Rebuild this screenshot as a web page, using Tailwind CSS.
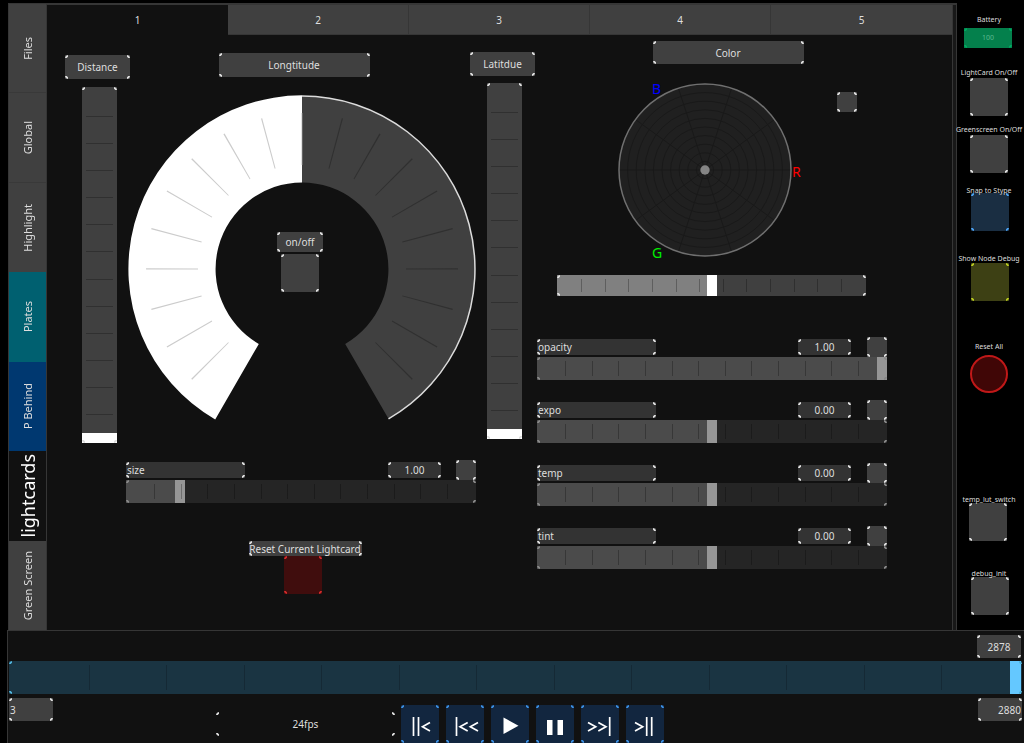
<!DOCTYPE html>
<html lang="en">
<head>
<meta charset="utf-8">
<meta name="viewport" content="width=device-width, initial-scale=1">
<title>Lightcards control panel</title>
<script src="https://cdn.jsdelivr.net/npm/@tailwindcss/browser@4"></script>
</head>
<!-- Elements with data-corners get four small corner marks in their text colour. -->
<body class="flex min-h-screen flex-col overflow-x-hidden bg-black font-['Noto_Sans',sans-serif] text-[10px] leading-3 text-[#dedede] **:data-corners:relative **:data-corners:before:pointer-events-none **:data-corners:before:absolute **:data-corners:before:inset-0 **:data-corners:before:z-10 **:data-corners:before:rounded-[3px] **:data-corners:before:border-2 **:data-corners:before:border-current **:data-corners:before:content-[''] **:data-corners:before:[mask:conic-gradient(at_3px_3px,transparent_75%,black_0)_0_0/calc(100%_-_3px)_calc(100%_-_3px)]">

<div class="flex flex-1 pt-[3px] pl-2">
  <nav aria-label="Pages" class="flex w-[39px] shrink-0 flex-col border-t border-r border-l border-[#363636] text-[11px]">
    <button class="flex flex-1 items-center justify-center bg-[#404040] shadow-[inset_0_-1px_#393939]"><span class="rotate-180 [writing-mode:vertical-rl]">Files</span></button>
    <button class="flex flex-1 items-center justify-center bg-[#404040] shadow-[inset_0_-1px_#393939]"><span class="rotate-180 [writing-mode:vertical-rl]">Global</span></button>
    <button class="flex flex-1 items-center justify-center bg-[#404040]"><span class="rotate-180 [writing-mode:vertical-rl]">Highlight</span></button>
    <button class="flex flex-1 items-center justify-center bg-[#006070]"><span class="rotate-180 [writing-mode:vertical-rl]">Plates</span></button>
    <button class="flex flex-1 items-center justify-center bg-[#003870]"><span class="rotate-180 [writing-mode:vertical-rl]">P Behind</span></button>
    <button aria-current="page" class="flex flex-1 items-center justify-center bg-[#111] text-[18px] leading-5 text-white"><span class="rotate-180 [writing-mode:vertical-rl]">lightcards</span></button>
    <button class="flex flex-1 items-center justify-center bg-[#404040]"><span class="rotate-180 [writing-mode:vertical-rl]">Green Screen</span></button>
  </nav>

  <main class="min-w-0 flex-1 border-t-2 border-r border-[#363636] bg-[#111]">
    <div role="tablist" class="grid h-[30px] grid-cols-5">
      <button role="tab" aria-selected="true">1</button>
      <button role="tab" aria-selected="false" class="border-r border-b border-[#363636] bg-[#404040]">2</button>
      <button role="tab" aria-selected="false" class="border-r border-b border-[#363636] bg-[#404040]">3</button>
      <button role="tab" aria-selected="false" class="border-r border-b border-[#363636] bg-[#404040]">4</button>
      <button role="tab" aria-selected="false" class="border-b border-[#363636] bg-[#404040]">5</button>
    </div>

    <div class="grid grid-cols-[490fr_415fr]">
      <section aria-label="Position" class="pl-[18px]">
        <div class="flex">
          <div class="flex w-[65px] shrink-0 flex-col items-center pt-5">
            <label for="distance" data-corners class="flex h-6 w-full items-center justify-center bg-[#404040]">Distance</label>
            <div data-corners class="mt-2 ml-1 h-[356px] w-[35px]">
              <input id="distance" type="range" min="0" max="100" value="0" class="block h-full w-full appearance-none bg-[#404040] [direction:rtl] [writing-mode:vertical-lr] [&::-webkit-slider-thumb]:h-[10px] [&::-webkit-slider-thumb]:w-[35px] [&::-webkit-slider-thumb]:appearance-none [&::-webkit-slider-thumb]:bg-white">
              <div class="pointer-events-none absolute inset-x-1 top-[29px] bottom-7 bg-[repeating-linear-gradient(to_bottom,#303030_0_1px,transparent_1px_calc((100%_-_1px)/11))]"></div>
            </div>
          </div>

          <div class="-mr-1.5 -ml-0.5 flex min-w-0 flex-1 flex-col items-center pt-[18px]">
            <div data-corners class="mr-4 flex h-6 w-[151px] items-center justify-center bg-[#404040]">Longtitude</div>
            <div class="relative mt-[18px] w-full">
              <svg role="img" aria-label="Longitude dial" viewBox="-174 -174 348 325" class="block w-full">
                <path d="M0 -173V-86.5A86.5 86.5 0 0 1 43.2 74.9L86.5 149.8A173 173 0 0 0 0 -173Z" fill="#404040"/>
                <path d="M0 -173A173 173 0 0 1 86.5 149.8" fill="none" stroke="#dcdcdc" stroke-width="1.5"/>
                <path d="M0 -173.7V-86.5A86.5 86.5 0 0 0 -43.2 74.9L-86.8 150.4A173.7 173.7 0 0 1 0 -173.7Z" fill="#fff"/>
                <path d="M-91.5 92.3A130 130 0 0 1 -33.1 -125.7" pathLength="120.5" fill="none" stroke="#ccc" stroke-width="52" stroke-dasharray=".5 14.5"/>
                <path d="M33.1 -125.7A130 130 0 0 1 91.5 92.3" pathLength="120.5" fill="none" stroke="#303030" stroke-width="52" stroke-dasharray=".5 14.5"/>
                <path d="M0 -156V-104" stroke="#aaa" stroke-width=".7"/>
              </svg>
              <div class="absolute inset-x-0 top-[137px] flex flex-col items-center pr-1">
                <span id="onoff" data-corners class="flex h-5 w-[46px] items-center justify-center bg-[#404040]">on/off</span>
                <button aria-labelledby="onoff" data-corners class="mt-0.5 size-[38px] bg-[#404040]"></button>
              </div>
            </div>
          </div>

          <div class="mr-0.5 flex w-[65px] shrink-0 flex-col items-center pt-[17px]">
            <label for="latitude" data-corners class="flex h-6 w-full items-center justify-center bg-[#404040]">Latitdue</label>
            <div data-corners class="mt-[7px] ml-1 h-[356px] w-[35px]">
              <input id="latitude" type="range" min="0" max="100" value="0" class="block h-full w-full appearance-none bg-[#404040] [direction:rtl] [writing-mode:vertical-lr] [&::-webkit-slider-thumb]:h-[10px] [&::-webkit-slider-thumb]:w-[35px] [&::-webkit-slider-thumb]:appearance-none [&::-webkit-slider-thumb]:bg-white">
              <div class="pointer-events-none absolute inset-x-1 top-[29px] bottom-7 bg-[repeating-linear-gradient(to_bottom,#303030_0_1px,transparent_1px_calc((100%_-_1px)/11))]"></div>
            </div>
          </div>
        </div>

        <div class="mt-[17px] mr-[61px] ml-[61px]">
          <div class="flex h-5 items-center">
            <label for="size" data-corners class="flex h-4 w-[119px] items-center bg-[#333] pl-px">size</label>
            <div data-corners class="mr-[15px] ml-auto h-4 w-[53px] bg-[#333]"><input aria-label="size value" value="1.00" class="block h-full w-full text-center"></div>
            <button aria-label="Reset size" data-corners class="size-5 bg-[#404040]"></button>
          </div>
          <div data-corners class="h-[23px] text-[#888]">
            <input id="size" type="range" min="0" max="7" value="1" style="--fill:15%" class="block h-full w-full appearance-none bg-[#252525] bg-[linear-gradient(#4b4b4b,#4b4b4b)] bg-[length:var(--fill)_100%] bg-no-repeat [&::-webkit-slider-thumb]:h-[23px] [&::-webkit-slider-thumb]:w-[10px] [&::-webkit-slider-thumb]:appearance-none [&::-webkit-slider-thumb]:bg-[#969696]">
            <div class="pointer-events-none absolute inset-x-7 inset-y-1 bg-[repeating-linear-gradient(to_right,#0004_0_1px,transparent_1px_calc((100%_-_1px)/11))]"></div>
          </div>
        </div>

        <div class="mt-[38px] flex flex-col items-center pl-2">
          <span id="reset-card" data-corners class="flex h-[15px] w-[113px] items-center justify-center bg-[#404040] whitespace-nowrap">Reset Current Lightcard</span>
          <button aria-labelledby="reset-card" data-corners class="mr-1 size-[38px] bg-[#400d0d] text-[#d02a2a]"></button>
        </div>
      </section>

      <section aria-label="Color" class="pt-[6px] pr-[65px]">
        <div class="flex justify-center pl-8">
          <div data-corners class="flex h-[23px] w-[151px] items-center justify-center bg-[#404040]">Color</div>
        </div>
        <div class="mt-[19px] flex items-start justify-between pr-[30px] pl-[81px]">
          <svg role="img" aria-label="Color wheel" viewBox="-87 -87 186 175" width="186" height="175" class="shrink-0 overflow-visible font-['Noto_Sans',sans-serif] text-[14px]">
            <circle r="86" fill="#202020"/>
            <g fill="none" stroke="#191919">
              <circle r="8.6"/><circle r="17.2"/><circle r="25.8"/><circle r="34.4"/><circle r="43"/><circle r="51.6"/><circle r="60.2"/><circle r="68.8"/><circle r="77.4"/>
              <path d="M-86 0H86M-69.6 -50.5L69.6 50.5M-26.6 -81.8L26.6 81.8M26.6 -81.8L-26.6 81.8M69.6 -50.5L-69.6 50.5"/>
            </g>
            <circle r="86" fill="none" stroke="#707070" stroke-width="1.5"/>
            <circle r="4.7" fill="#858585"/>
            <text x="-53" y="-76" fill="#0000ff">B</text>
            <text x="87" y="7" fill="#ff0000">R</text>
            <text x="-53" y="88" fill="#00f000">G</text>
          </svg>
          <button aria-label="Reset color" data-corners class="mt-[9px] size-5 bg-[#404040]"></button>
        </div>
        <div data-corners class="mr-[21px] ml-5 mt-[17px] h-[21px]">
          <input aria-label="Color level" type="range" min="0" max="100" value="50" style="--fill:50%" class="block h-full w-full appearance-none bg-[#404040] bg-[linear-gradient(#808080,#808080)] bg-[length:var(--fill)_100%] bg-no-repeat [&::-webkit-slider-thumb]:h-[21px] [&::-webkit-slider-thumb]:w-[10px] [&::-webkit-slider-thumb]:appearance-none [&::-webkit-slider-thumb]:bg-white">
          <div class="pointer-events-none absolute inset-x-6 inset-y-1 bg-[repeating-linear-gradient(to_right,#0004_0_1px,transparent_1px_calc((100%_-_1px)/11))]"></div>
        </div>

        <div class="mt-[41px] flex flex-col gap-5">
          <div>
            <div class="flex h-5 items-center">
              <label for="opacity" data-corners class="flex h-4 w-[119px] items-center bg-[#333] pl-px">opacity</label>
              <div data-corners class="mr-4 ml-auto h-4 w-[53px] bg-[#333]"><input aria-label="opacity value" value="1.00" class="block h-full w-full text-center"></div>
              <button aria-label="Reset opacity" data-corners class="size-5 bg-[#404040]"></button>
            </div>
            <div data-corners class="h-[23px] text-[#888]">
              <input id="opacity" type="range" min="0" max="100" value="100" style="--fill:100%" class="block h-full w-full appearance-none bg-[#252525] bg-[linear-gradient(#4b4b4b,#4b4b4b)] bg-[length:var(--fill)_100%] bg-no-repeat [&::-webkit-slider-thumb]:h-[23px] [&::-webkit-slider-thumb]:w-[10px] [&::-webkit-slider-thumb]:appearance-none [&::-webkit-slider-thumb]:bg-[#969696]">
              <div class="pointer-events-none absolute inset-x-7 inset-y-1 bg-[repeating-linear-gradient(to_right,#0004_0_1px,transparent_1px_calc((100%_-_1px)/11))]"></div>
            </div>
          </div>
          <div>
            <div class="flex h-5 items-center">
              <label for="expo" data-corners class="flex h-4 w-[119px] items-center bg-[#333] pl-px">expo</label>
              <div data-corners class="mr-4 ml-auto h-4 w-[53px] bg-[#333]"><input aria-label="expo value" value="0.00" class="block h-full w-full text-center"></div>
              <button aria-label="Reset expo" data-corners class="size-5 bg-[#404040]"></button>
            </div>
            <div data-corners class="h-[23px] text-[#888]">
              <input id="expo" type="range" min="-100" max="100" value="0" style="--fill:50%" class="block h-full w-full appearance-none bg-[#252525] bg-[linear-gradient(#4b4b4b,#4b4b4b)] bg-[length:var(--fill)_100%] bg-no-repeat [&::-webkit-slider-thumb]:h-[23px] [&::-webkit-slider-thumb]:w-[10px] [&::-webkit-slider-thumb]:appearance-none [&::-webkit-slider-thumb]:bg-[#969696]">
              <div class="pointer-events-none absolute inset-x-7 inset-y-1 bg-[repeating-linear-gradient(to_right,#0004_0_1px,transparent_1px_calc((100%_-_1px)/11))]"></div>
            </div>
          </div>
          <div>
            <div class="flex h-5 items-center">
              <label for="temp" data-corners class="flex h-4 w-[119px] items-center bg-[#333] pl-px">temp</label>
              <div data-corners class="mr-4 ml-auto h-4 w-[53px] bg-[#333]"><input aria-label="temp value" value="0.00" class="block h-full w-full text-center"></div>
              <button aria-label="Reset temp" data-corners class="size-5 bg-[#404040]"></button>
            </div>
            <div data-corners class="h-[23px] text-[#888]">
              <input id="temp" type="range" min="-100" max="100" value="0" style="--fill:50%" class="block h-full w-full appearance-none bg-[#252525] bg-[linear-gradient(#4b4b4b,#4b4b4b)] bg-[length:var(--fill)_100%] bg-no-repeat [&::-webkit-slider-thumb]:h-[23px] [&::-webkit-slider-thumb]:w-[10px] [&::-webkit-slider-thumb]:appearance-none [&::-webkit-slider-thumb]:bg-[#969696]">
              <div class="pointer-events-none absolute inset-x-7 inset-y-1 bg-[repeating-linear-gradient(to_right,#0004_0_1px,transparent_1px_calc((100%_-_1px)/11))]"></div>
            </div>
          </div>
          <div>
            <div class="flex h-5 items-center">
              <label for="tint" data-corners class="flex h-4 w-[119px] items-center bg-[#333] pl-px">tint</label>
              <div data-corners class="mr-4 ml-auto h-4 w-[53px] bg-[#333]"><input aria-label="tint value" value="0.00" class="block h-full w-full text-center"></div>
              <button aria-label="Reset tint" data-corners class="size-5 bg-[#404040]"></button>
            </div>
            <div data-corners class="h-[23px] text-[#888]">
              <input id="tint" type="range" min="-100" max="100" value="0" style="--fill:50%" class="block h-full w-full appearance-none bg-[#252525] bg-[linear-gradient(#4b4b4b,#4b4b4b)] bg-[length:var(--fill)_100%] bg-no-repeat [&::-webkit-slider-thumb]:h-[23px] [&::-webkit-slider-thumb]:w-[10px] [&::-webkit-slider-thumb]:appearance-none [&::-webkit-slider-thumb]:bg-[#969696]">
              <div class="pointer-events-none absolute inset-x-7 inset-y-1 bg-[repeating-linear-gradient(to_right,#0004_0_1px,transparent_1px_calc((100%_-_1px)/11))]"></div>
            </div>
          </div>
        </div>
      </section>
    </div>
  </main>

  <div class="w-1 border-t-2 border-r border-[#363636] bg-[#181818]"></div>

  <aside aria-label="Global switches" class="flex w-[67px] shrink-0 flex-col items-center pt-[13px] pr-[3px] text-[7px] leading-[8px] whitespace-nowrap">
    <span>Battery</span>
    <output aria-label="Battery level" data-corners class="mt-1 mr-0.5 flex h-5 w-12 items-center justify-center bg-[#04804c] text-[#00a860]"><span class="text-[#5cb890]">100</span></output>
    <span id="sw-card" class="mt-[21px]">LightCard On/Off</span>
    <button aria-labelledby="sw-card" data-corners class="mt-px size-[38px] bg-[#404040]"></button>
    <span id="sw-green" class="mt-[10px]">Greenscreen On/Off</span>
    <button aria-labelledby="sw-green" data-corners class="mt-px size-[38px] bg-[#404040]"></button>
    <span id="sw-snap" class="relative z-10 mt-[14px]">Snap to Stype</span>
    <button aria-labelledby="sw-snap" data-corners class="-mt-0.5 -mr-0.5 size-[38px] bg-[#1a2e42] text-[#4aa0f0]"></button>
    <span id="sw-node" class="relative z-10 mt-6">Show Node Debug</span>
    <button aria-labelledby="sw-node" data-corners class="-mr-0.5 size-[38px] bg-[#3d4014] text-[#b8c820]"></button>
    <span id="sw-reset" class="mt-[42px]">Reset All</span>
    <button aria-labelledby="sw-reset" class="mt-1 size-[38px] rounded-full border-2 border-[#c01818] bg-[#400606]"></button>
    <span id="sw-lut" class="relative z-10 mt-[103px]">temp_lut_switch</span>
    <button aria-labelledby="sw-lut" data-corners class="-mt-px mr-0.5 size-[38px] bg-[#404040]"></button>
    <span id="sw-init" class="relative z-10 mt-[29px]">debug_init</span>
    <button aria-labelledby="sw-init" data-corners class="-mt-px -mr-0.5 size-[38px] bg-[#404040]"></button>
  </aside>
</div>

<footer class="ml-[7px] border-t border-l border-[#363636] bg-[#111] pt-1 pr-0.5 pl-px">
  <div data-corners class="mr-px ml-auto h-[23px] w-11 bg-[#404040]"><input aria-label="Current frame" value="2878" class="block h-full w-full text-center"></div>
  <div data-corners class="mt-[3px] h-[33px] text-[#50b4dc]">
    <input aria-label="Timeline" type="range" min="3" max="2880" value="2878" class="block h-full w-full appearance-none bg-[#1a3442] [&::-webkit-slider-thumb]:h-[33px] [&::-webkit-slider-thumb]:w-[11px] [&::-webkit-slider-thumb]:appearance-none [&::-webkit-slider-thumb]:bg-[#64c8ff]">
    <div class="pointer-events-none absolute inset-x-20 inset-y-1 bg-[repeating-linear-gradient(to_right,#152935_0_1px,transparent_1px_calc((100%_-_1px)/11))]"></div>
  </div>
  <div class="flex items-start pt-1">
    <div data-corners class="h-[23px] w-11 bg-[#404040]"><input aria-label="First frame" value="3" class="block h-full w-full pl-px text-left"></div>
    <output data-corners class="mt-[14px] ml-[163px] flex h-6 w-[179px] items-center justify-center">24fps</output>
    <div class="mt-[7px] ml-1.5 flex gap-[7px] text-[#3b8ee0]">
      <button aria-label="Go to first frame" data-corners class="size-[38px] bg-[#12263f]"><svg viewBox="0 0 38 38" class="block" fill="none" stroke="#fff" stroke-width="1.7"><path d="M12.500 12V31M17.500 12V31M29 17.500L21.500 21.800L29 26"/></svg></button>
      <button aria-label="Step back" data-corners class="size-[38px] bg-[#12263f]"><svg viewBox="0 0 38 38" class="block" fill="none" stroke="#fff" stroke-width="1.7"><path d="M10.500 12V31M21.700 17.500L14 21.800L21.700 26M32 17.500L24.300 21.800L32 26"/></svg></button>
      <button aria-label="Play" data-corners class="size-[38px] bg-[#12263f]"><svg viewBox="0 0 38 38" class="block" fill="#fff"><path d="M12.500 12.500L27.500 20.700L12.500 29Z"/></svg></button>
      <button aria-label="Pause" data-corners class="size-[38px] bg-[#12263f]"><svg viewBox="0 0 38 38" class="block" fill="#fff"><path d="M11 15H16.500V30H11ZM21.500 15H27V30H21.500Z"/></svg></button>
      <button aria-label="Step forward" data-corners class="size-[38px] bg-[#12263f]"><svg viewBox="0 0 38 38" class="block" fill="none" stroke="#fff" stroke-width="1.7"><path d="M7 17.500L14.700 21.800L7 26M17.300 17.500L25 21.800L17.300 26M28.700 12V31"/></svg></button>
      <button aria-label="Go to last frame" data-corners class="size-[38px] bg-[#12263f]"><svg viewBox="0 0 38 38" class="block" fill="none" stroke="#fff" stroke-width="1.7"><path d="M9 17.500L16.700 21.800L9 26M20.700 12V31M25.700 12V31"/></svg></button>
    </div>
    <div data-corners class="ml-auto h-[23px] w-11 bg-[#404040]"><input aria-label="Last frame" value="2880" class="block h-full w-full pr-px text-right"></div>
  </div>
</footer>

<script>
  // Keep each filled track in step with its thumb.
  document.querySelectorAll('input[type=range][style]').forEach(function (el) {
    el.addEventListener('input', function () {
      el.style.setProperty('--fill', 100 * (el.value - el.min) / (el.max - el.min) + '%');
    });
  });
</script>
</body>
</html>
